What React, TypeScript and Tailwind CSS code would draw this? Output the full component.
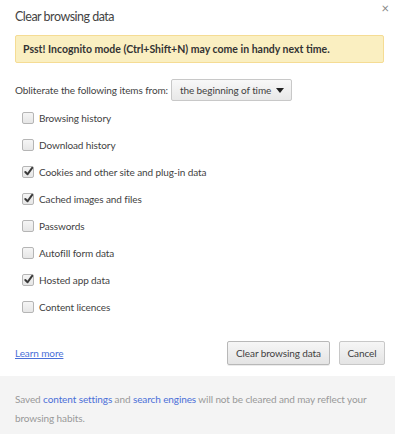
import React from "react";

const items = [
  { label: "Browsing history", checked: false },
  { label: "Download history", checked: false },
  { label: "Cookies and other site and plug-in data", checked: true },
  { label: "Cached images and files", checked: true },
  { label: "Passwords", checked: false },
  { label: "Autofill form data", checked: false },
  { label: "Hosted app data", checked: true },
  { label: "Content licences", checked: false },
];

function Box({ checked }: { checked: boolean }) {
  return (
    <span className="relative flex h-[12px] w-[12px] shrink-0 items-center justify-center rounded-[2px] border border-[#b5b5b5] bg-gradient-to-b from-[#f5f5f5] to-[#e6e6e6]">
      {checked && (
        <svg width="11" height="11" viewBox="0 0 12 12" className="absolute -top-[1px] left-[0px]">
          <path d="M2.5 6.5 L5 9 L10 2" fill="none" stroke="#3a3a3a" strokeWidth="2.2" strokeLinecap="round" strokeLinejoin="round" />
        </svg>
      )}
    </span>
  );
}

export default function App() {
  return (
    <div
      className="flex h-[434px] w-[395px] flex-col bg-white text-[10px] tracking-[-0.1px] text-[#3f3f3f]"
      style={{ fontFamily: 'Lato, "Noto Sans", sans-serif' }}
    >
      <div className="relative pl-[15px] pr-[10px] pt-[7px]">
        <h1 className="text-[12.5px] leading-[20px] tracking-[-0.5px] text-[#444]">Clear browsing data</h1>
        <span className="absolute right-[6px] top-[2px] text-[13px] leading-none text-[#888]">×</span>
        <div className="mr-[1px] mt-[8px] h-[28px] rounded-[2px] border border-[#f5dc94] bg-[#faefc1] px-[7px] pt-[5px] text-[10.5px] font-bold leading-[16px] tracking-normal text-[#333]">
          Psst! Incognito mode (Ctrl+Shift+N) may come in handy next time.
        </div>
        <div className="mt-[16px] flex items-center gap-[3px]">
          <span className="whitespace-nowrap">Obliterate the following items from:</span>
          <div className="flex h-[22px] w-[121px] items-center justify-between whitespace-nowrap rounded-[2px] border border-[#c8c8c8] bg-gradient-to-b from-[#f8f8f8] to-[#e8e8e8] pl-[8px] pr-[7px]">
            <span>the beginning of time</span>
            <svg width="8" height="5" viewBox="0 0 8 5">
              <path d="M0 0 H8 L4 5 Z" fill="#222" />
            </svg>
          </div>
        </div>
        <ul className="mt-[9px] flex flex-col gap-[11px] pl-[7px]">
          {items.map((it) => (
            <li key={it.label} className="flex h-[16px] items-center gap-[5px]">
              <Box checked={it.checked} />
              <span>{it.label}</span>
            </li>
          ))}
        </ul>
        <div className="mt-[26px] flex items-center justify-between">
          <a className="text-[#4a6fd8] underline">Learn more</a>
          <div className="flex gap-[9px]">
            <button className="h-[24px] w-[103px] rounded-[2px] border border-[#b8b8b8] bg-gradient-to-b from-[#f6f6f6] to-[#e4e4e4] shadow-[0_1px_0_rgba(0,0,0,0.08)]">
              Clear browsing data
            </button>
            <button className="h-[24px] w-[46px] rounded-[2px] border border-[#c8c8c8] bg-gradient-to-b from-[#f6f6f6] to-[#e4e4e4]">
              Cancel
            </button>
          </div>
        </div>
      </div>
      <p className="mt-[11px] flex-1 bg-[#f4f4f4] px-[15px] pt-[14px] leading-[19px] text-[#999]">
        Saved <span className="text-[#4a6fd8]">content settings</span> and{" "}
        <span className="text-[#4a6fd8]">search engines</span> will not be cleared and may reflect your
        browsing habits.
      </p>
    </div>
  );
}
